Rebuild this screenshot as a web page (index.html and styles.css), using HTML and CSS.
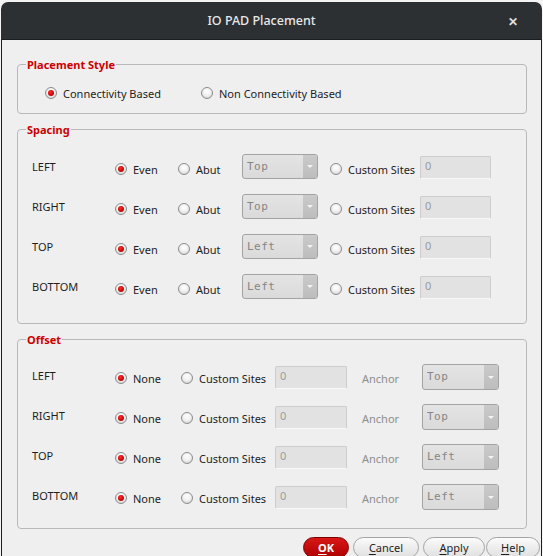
FILE: index.html
```html
<!DOCTYPE html>
<html>
<head>
<meta charset="utf-8">
<link rel="stylesheet" href="styles.css">
</head>
<body>
<div class="window">
  <div class="titlebar">
    <span class="title">IO PAD Placement</span>
    <span class="close">&#x2715;</span>
  </div>
  <div class="content">
    <div class="group g1">
      <div class="group-title">Placement Style</div>
      <div class="style-row">
        <span class="opt w-conn"><span class="radio on"></span>Connectivity Based</span>
        <span class="opt"><span class="radio"></span>Non Connectivity Based</span>
      </div>
    </div>

    <div class="group g2">
      <div class="group-title">Spacing</div>
      <div class="spacing-grid">
        <span class="lbl">LEFT</span>
        <span class="opt"><span class="radio on"></span>Even</span>
        <span class="opt"><span class="radio"></span>Abut</span>
        <span class="combo sp"><span class="combo-text">Top</span><span class="combo-arrow"></span></span>
        <span class="opt"><span class="radio"></span>Custom Sites</span>
        <span class="input sp-in">0</span>

        <span class="lbl">RIGHT</span>
        <span class="opt"><span class="radio on"></span>Even</span>
        <span class="opt"><span class="radio"></span>Abut</span>
        <span class="combo sp"><span class="combo-text">Top</span><span class="combo-arrow"></span></span>
        <span class="opt"><span class="radio"></span>Custom Sites</span>
        <span class="input sp-in">0</span>

        <span class="lbl">TOP</span>
        <span class="opt"><span class="radio on"></span>Even</span>
        <span class="opt"><span class="radio"></span>Abut</span>
        <span class="combo sp"><span class="combo-text">Left</span><span class="combo-arrow"></span></span>
        <span class="opt"><span class="radio"></span>Custom Sites</span>
        <span class="input sp-in">0</span>

        <span class="lbl">BOTTOM</span>
        <span class="opt"><span class="radio on"></span>Even</span>
        <span class="opt"><span class="radio"></span>Abut</span>
        <span class="combo sp"><span class="combo-text">Left</span><span class="combo-arrow"></span></span>
        <span class="opt"><span class="radio"></span>Custom Sites</span>
        <span class="input sp-in">0</span>
      </div>
    </div>

    <div class="group g3">
      <div class="group-title">Offset</div>
      <div class="offset-grid">
        <span class="lbl">LEFT</span>
        <span class="opt"><span class="radio on"></span>None</span>
        <span class="opt"><span class="radio"></span>Custom Sites</span>
        <span class="input">0</span>
        <span class="anchor">Anchor</span>
        <span class="combo of"><span class="combo-text">Top</span><span class="combo-arrow"></span></span>

        <span class="lbl">RIGHT</span>
        <span class="opt"><span class="radio on"></span>None</span>
        <span class="opt"><span class="radio"></span>Custom Sites</span>
        <span class="input">0</span>
        <span class="anchor">Anchor</span>
        <span class="combo of"><span class="combo-text">Top</span><span class="combo-arrow"></span></span>

        <span class="lbl">TOP</span>
        <span class="opt"><span class="radio on"></span>None</span>
        <span class="opt"><span class="radio"></span>Custom Sites</span>
        <span class="input">0</span>
        <span class="anchor">Anchor</span>
        <span class="combo of"><span class="combo-text">Left</span><span class="combo-arrow"></span></span>

        <span class="lbl">BOTTOM</span>
        <span class="opt"><span class="radio on"></span>None</span>
        <span class="opt"><span class="radio"></span>Custom Sites</span>
        <span class="input">0</span>
        <span class="anchor">Anchor</span>
        <span class="combo of"><span class="combo-text">Left</span><span class="combo-arrow"></span></span>
      </div>
    </div>

    <div class="buttons">
      <span class="btn ok"><u>O</u>K</span>
      <span class="btn cancel"><u>C</u>ancel</span>
      <span class="btn apply"><u>A</u>pply</span>
      <span class="btn help"><u>H</u>elp</span>
    </div>
  </div>
</div>
</body>
</html>
```

FILE: styles.css
```css
html, body {
  margin: 0;
  padding: 0;
  background: #f4f4f4;
  overflow: hidden;
  height: 556px;
}
body {
  font-family: "Noto Sans", "Open Sans", sans-serif;
  font-size: 11px;
  color: #1e1e1e;
}
.window {
  margin: 2px 0 0 1px;
  width: 541px;
}
.titlebar {
  height: 37px;
  background: #2c3033;
  border-radius: 7px 7px 0 0;
  border-bottom: 1px solid #1b1d1f;
  display: flex;
  align-items: center;
  justify-content: center;
  padding-right: 20px;
  color: #e8e8e8;
  position: relative;
}
.title {
  font-size: 12.5px;
  font-weight: 500;
}
.close {
  position: absolute;
  right: 24px;
  top: 11px;
  font-size: 12px;
  font-weight: bold;
  color: #e0e0e0;
}
.content {
  background: #efefef;
  border-left: 1px solid #1c1c1c;
  border-right: 1px solid #1c1c1c;
  height: 600px;
  padding: 24px 14px 0 15px;
}
.group {
  border: 1px solid #b9b9b9;
  border-radius: 4px;
  margin-bottom: 15px;
}
.group-title {
  display: table;
  margin: -8px 0 0 8px;
  padding: 0 1px;
  height: 16px;
  line-height: 16px;
  background: #efefef;
  color: #cc0000;
  font-weight: bold;
  font-size: 11px;
}
.style-row {
  display: flex;
  align-items: center;
  height: 24px;
  margin: 8px 0 8px 27px;
}
.w-conn { width: 156px; }
.opt {
  display: flex;
  align-items: center;
  white-space: nowrap;
}
.radio {
  box-sizing: border-box;
  width: 12px;
  height: 12px;
  border: 1px solid #8c8c8c;
  border-radius: 50%;
  background: radial-gradient(circle at 50% 35%, #ffffff 0%, #f2f2f2 45%, #c9c9c9 100%);
  margin-right: 6px;
  display: flex;
  align-items: center;
  justify-content: center;
  flex: none;
}
.radio.on::after {
  content: "";
  width: 6px;
  height: 6px;
  border-radius: 50%;
  background: radial-gradient(circle at 40% 35%, #ff2a2a, #c00000 70%, #900000);
}
.spacing-grid {
  display: grid;
  grid-template-columns: 83px 63px 64px 88px 90px 72px;
  grid-auto-rows: 40px;
  align-items: center;
  margin: 11px 0 14px 14px;
}
.offset-grid {
  display: grid;
  grid-template-columns: 83px 66px 94px 87px 60px 77px;
  grid-auto-rows: 40px;
  align-items: center;
  margin: 10px 0 10px 14px;
}
.lbl {
  margin-bottom: 6px;
}
.combo {
  display: flex;
  height: 25px;
  box-sizing: border-box;
  border: 1px solid #a3a3a3;
  border-radius: 3px;
  background: linear-gradient(#e4e4e4, #dadada);
  font-family: "DejaVu Sans Mono", monospace;
  color: #858585;
  font-size: 11px;
  overflow: hidden;
}
.combo.sp { width: 76px; margin-bottom: 5px; }
.combo.of { width: 77px; margin-bottom: 2px; height: 26px; }
.combo-text {
  flex: 1;
  padding-left: 4px;
  line-height: 23px;
  letter-spacing: 0.5px;
}
.combo-arrow {
  width: 14px;
  background: linear-gradient(#cacaca, #bdbdbd);
  display: flex;
  align-items: center;
  justify-content: center;
}
.combo-arrow::after {
  content: "";
  border-left: 3px solid transparent;
  border-right: 3px solid transparent;
  border-top: 3px solid #f4f4f4;
}
.input {
  width: 72px;
  height: 23px;
  box-sizing: border-box;
  border: 1px solid #cdcdcd;
  border-bottom-color: #f8f8f8;
  border-radius: 2px;
  background: #e2e2e2;
  color: #9a9a9a;
  padding-left: 4px;
  line-height: 18px;
  font-size: 11px;
}
.input.sp-in { margin-bottom: 4px; width: 71px; }
.offset-grid .input { margin-bottom: 2px; }
.anchor {
  color: #8d8d8d;
}
.buttons {
  display: flex;
  justify-content: flex-end;
  gap: 4px;
  margin-top: -7px;
  margin-right: -13px;
}
.btn {
  height: 21px;
  box-sizing: border-box;
  border: 1px solid #a3a3a3;
  border-radius: 11px;
  background: linear-gradient(#fbfbfb, #e0e0e0);
  display: flex;
  align-items: center;
  justify-content: center;
  font-size: 11px;
  color: #1e1e1e;
}
.btn u { text-decoration: underline; text-underline-offset: 2px; }
.ok {
  width: 46px;
  background: linear-gradient(#d81818, #b00000);
  border-color: #7a0000;
  color: #ffffff;
  font-weight: bold;
}
.cancel { width: 66px; }
.apply { width: 62px; margin-right: -3px; }
.help { width: 54px; }
```
